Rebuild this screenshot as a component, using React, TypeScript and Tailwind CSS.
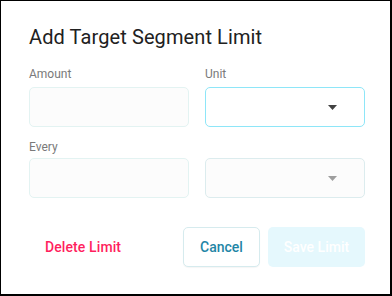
import React from "react";

function Arrow({ color }: { color: string }) {
  return (
    <svg width="9" height="5" viewBox="0 0 9 5" className="block">
      <path d="M0 0 L9 0 L4.5 5 Z" fill={color} />
    </svg>
  );
}

export default function App() {
  return (
    <div
      className="w-[392px] h-[296px] bg-white border-black border-t border-l border-r-2 border-b-2 box-border pl-[28px] pr-[25px] pt-[24px]"
      style={{ fontFamily: "Roboto, 'Noto Sans', sans-serif" }}
    >
      <h1 className="text-[20px] leading-[24px] text-[#212121] font-normal tracking-[0.1px]">
        Add Target Segment Limit
      </h1>
      <div className="grid grid-cols-2 gap-x-[16px] mt-[18px]">
        <div className="flex flex-col">
          <label className="text-[12px] leading-[14px] text-[#7a7a7a]">Amount</label>
          <div className="mt-[6px] h-[40px] rounded-[5px] border border-[#e3f3f2] bg-[#fcfcfc]" />
        </div>
        <div className="flex flex-col">
          <label className="text-[12px] leading-[14px] text-[#7a7a7a]">Unit</label>
          <div className="mt-[6px] h-[40px] rounded-[5px] border border-[#8ee6f8] bg-white flex items-center justify-end pr-[27px]">
            <Arrow color="#424242" />
          </div>
        </div>
        <div className="flex flex-col mt-[13px]">
          <label className="text-[12px] leading-[14px] text-[#7a7a7a]">Every</label>
          <div className="mt-[4px] h-[40px] rounded-[5px] border border-[#e3f3f2] bg-[#fcfcfc]" />
        </div>
        <div className="flex flex-col mt-[13px]">
          <div className="h-[14px]" />
          <div className="mt-[4px] h-[40px] rounded-[5px] border border-[#dcecee] bg-[#fcfcfc] flex items-center justify-end pr-[27px]">
            <Arrow color="#9e9e9e" />
          </div>
        </div>
      </div>
      <div className="flex items-center mt-[29px]">
        <button className="h-[40px] px-[16px] text-[14px] font-medium text-[#ff1f5e] tracking-[0.1px]">
          Delete Limit
        </button>
        <div className="flex-1" />
        <button className="w-[77px] h-[40px] rounded-[5px] border border-[#d6ebee] bg-white text-[14px] font-medium text-[#1f86a6] shadow-[0_1px_1px_rgba(0,0,0,0.04)]">
          Cancel
        </button>
        <button className="ml-[8px] w-[97px] h-[40px] rounded-[5px] bg-[#e5f8fd] text-[14px] font-medium text-white">
          Save Limit
        </button>
      </div>
    </div>
  );
}
